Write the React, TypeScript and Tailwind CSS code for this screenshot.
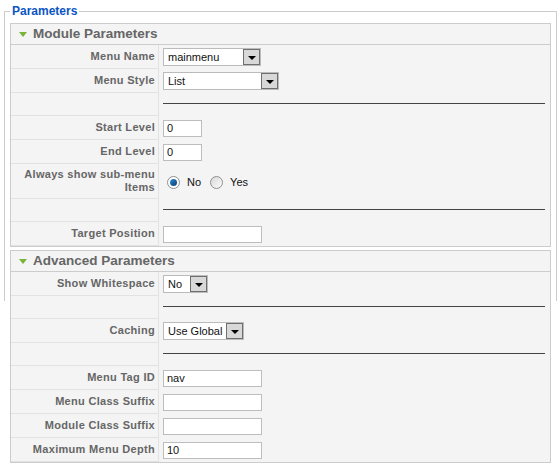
import React from 'react';

type Row =
  | { kind: 'select'; label: string; value: string; width: string }
  | { kind: 'text'; label: string; value: string; width: string }
  | { kind: 'radio'; label: string }
  | { kind: 'spacer' };

const moduleRows: Row[] = [
  { kind: 'select', label: 'Menu Name', value: 'mainmenu', width: 'w-[98px]' },
  { kind: 'select', label: 'Menu Style', value: 'List', width: 'w-[116px]' },
  { kind: 'spacer' },
  { kind: 'text', label: 'Start Level', value: '0', width: 'w-[39px]' },
  { kind: 'text', label: 'End Level', value: '0', width: 'w-[39px]' },
  { kind: 'radio', label: 'Always show sub-menu Items' },
  { kind: 'spacer' },
  { kind: 'text', label: 'Target Position', value: '', width: 'w-[99px]' },
];

const advancedRows: Row[] = [
  { kind: 'select', label: 'Show Whitespace', value: 'No', width: 'w-[45px]' },
  { kind: 'spacer' },
  { kind: 'select', label: 'Caching', value: 'Use Global', width: 'w-[81px]' },
  { kind: 'spacer' },
  { kind: 'text', label: 'Menu Tag ID', value: 'nav', width: 'w-[99px]' },
  { kind: 'text', label: 'Menu Class Suffix', value: '', width: 'w-[99px]' },
  { kind: 'text', label: 'Module Class Suffix', value: '', width: 'w-[99px]' },
  { kind: 'text', label: 'Maximum Menu Depth', value: '10', width: 'w-[99px]' },
];

const FakeSelect = ({ value, width }: { value: string; width: string }) => (
  <div className={`${width} h-[18px] border border-[#bbbbbb] bg-white flex items-center`}>
    <span className="flex-1 pl-[4px] text-[11px] text-[#111] leading-none">{value}</span>
    <div className="w-[17px] h-[16px] border border-[#6f6f6f] bg-[#d8d8d8] flex items-end justify-center pb-[4px]">
      <div className="w-0 h-0 border-l-[4px] border-r-[4px] border-t-[4px] border-l-transparent border-r-transparent border-t-black" />
    </div>
  </div>
);

const Radio = ({ checked }: { checked?: boolean }) => (
  <span
    className={`w-[13px] h-[13px] rounded-full border border-[#8e8f8f] flex items-center justify-center ${
      checked ? 'bg-white' : 'bg-gradient-to-br from-[#d9d9d9] to-[#fbfbfb]'
    }`}
  >
    {checked && <span className="w-[7px] h-[7px] rounded-full bg-gradient-to-br from-[#2f8bd1] to-[#0a3f74]" />}
  </span>
);

const ParamRow = ({ row }: { row: Row }) => {
  if (row.kind === 'spacer') {
    return (
      <div className="flex">
        <div className="w-[148px] h-[23px] shrink-0 border-r border-b border-[#e2e2e2]" />
        <div className="flex-1 pl-[4px] pr-[5px] pt-[10px]">
          <div className="h-px bg-[#444]" />
        </div>
      </div>
    );
  }
  const tall = row.kind === 'radio';
  return (
    <div className="flex">
      <div
        className={`w-[148px] shrink-0 border-r border-b border-[#e2e2e2] flex items-center justify-end text-right pr-[3px] pl-[6px] font-bold text-[11px] tracking-[0.3px] leading-[13px] text-[#666] ${
          tall ? 'h-[35px]' : 'h-[24px]'
        }`}
      >
        {row.label}
      </div>
      <div className="flex-1 pl-[4px] flex items-center">
        {row.kind === 'select' && <FakeSelect value={row.value} width={row.width} />}
        {row.kind === 'text' && (
          <input
            readOnly
            defaultValue={row.value}
            className={`${row.width} h-[17px] border border-[#bdbdbd] bg-white text-[11px] text-[#111] px-[3px] outline-none`}
          />
        )}
        {row.kind === 'radio' && (
          <div className="flex items-center text-[11px] text-[#111] pl-[4px] pt-[1px]">
            <Radio checked />
            <span className="ml-[7px] mr-[9px]">No</span>
            <Radio />
            <span className="ml-[7px]">Yes</span>
          </div>
        )}
      </div>
    </div>
  );
};

const Panel = ({ title, rows, className = '' }: { title: string; rows: Row[]; className?: string }) => (
  <div className={`border border-[#cccccc] bg-[#f4f4f4] ${className}`}>
    <div className="h-[21px] border-b border-[#cccccc] flex items-center pl-[8px]">
      <div className="w-0 h-0 border-l-[4px] border-r-[4px] border-t-[5px] border-l-transparent border-r-transparent border-t-[#76b43a]" />
      <span className="ml-[6px] font-bold text-[13.5px] text-[#666] leading-none">{title}</span>
    </div>
    {rows.map((r, i) => (
      <ParamRow key={i} row={r} />
    ))}
  </div>
);

const App: React.FC = () => {
  return (
    <div className="w-[560px] h-[476px] bg-white overflow-hidden font-['Liberation_Sans',Arial,sans-serif]">
      <div className="pt-[3px] pl-[4px] w-[557px]">
        <fieldset className="h-[298px] border border-b-0 border-[#cccccc] px-[5px] pt-[4px]">
          <legend className="px-[2px] text-[12px] leading-[16px] font-bold text-[#0b55c4]">Parameters</legend>
          <Panel title="Module Parameters" rows={moduleRows} />
          <Panel title="Advanced Parameters" rows={advancedRows} className="mt-[3px]" />
        </fieldset>
      </div>
    </div>
  );
};

export default App;
